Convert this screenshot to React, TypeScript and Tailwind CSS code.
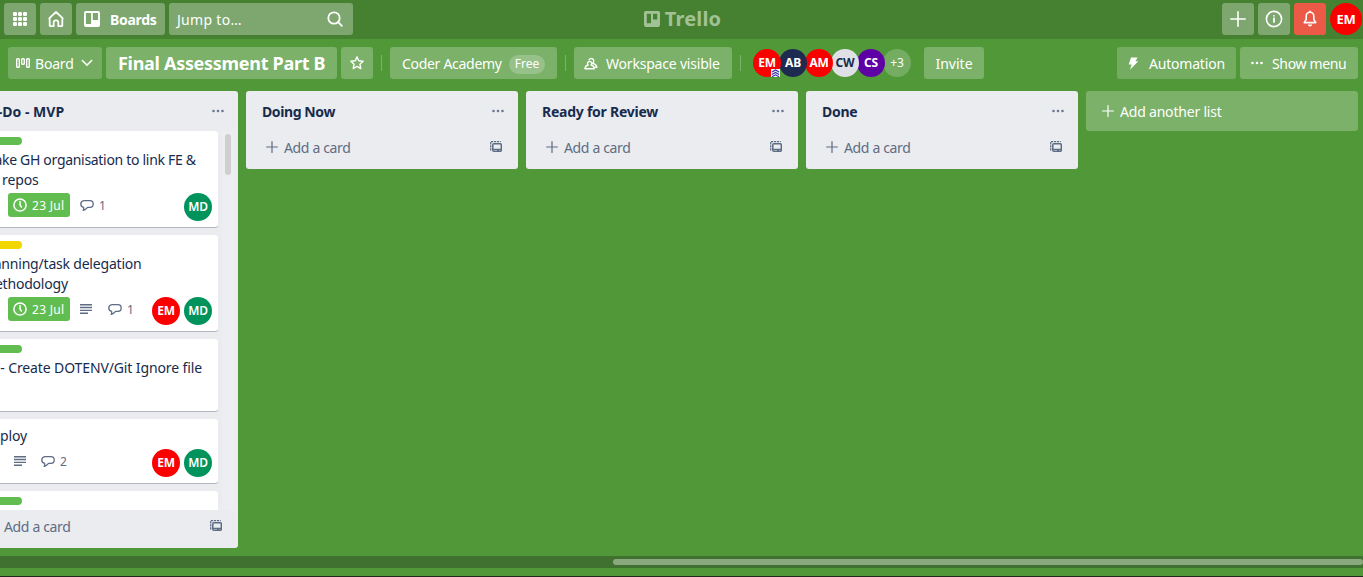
import React from "react";

type IconProps = { className?: string };

const cx = (...parts: (string | undefined | false)[]) => parts.filter(Boolean).join(" ");

const AppsIcon = () => (
  <svg width="16" height="16" viewBox="0 0 16 16" className="shrink-0 fill-white">
    {[1, 6, 11].map((y) =>
      [1, 6, 11].map((x) => <rect key={x + "-" + y} x={x} y={y} width="4" height="4" rx="1.2" />),
    )}
  </svg>
);

const HomeIcon = () => (
  <svg width="18" height="18" viewBox="0 0 18 18" fill="none" stroke="white" strokeWidth="1.8" strokeLinejoin="round" strokeLinecap="round" className="shrink-0">
    <path d="M2.2 8.4 9 1.9l6.8 6.5M2.7 8v7.4q0 .8.8.8h3.2V12q0-1.7 2.3-1.7t2.3 1.7v4.2h3.2q.8 0 .8-.8V8" />
  </svg>
);

const TrelloIcon = ({ className }: IconProps) => (
  <svg width="16" height="16" viewBox="0 0 16 16" className={cx("shrink-0", className)} fill="currentColor" fillRule="evenodd">
    <path d="M2 0h12a2 2 0 0 1 2 2v12a2 2 0 0 1-2 2H2a2 2 0 0 1-2-2V2a2 2 0 0 1 2-2Zm-.1 2v11h5.2V2Zm6.9 0v7h5.2V2Z" />
  </svg>
);

const LogoIcon = () => (
  <svg width="16" height="16" viewBox="0 0 16 16" className="shrink-0" fill="currentColor" fillRule="evenodd">
    <path d="M2 0h12a2 2 0 0 1 2 2v12a2 2 0 0 1-2 2H2a2 2 0 0 1-2-2V2a2 2 0 0 1 2-2Zm.8 2.8v9.4H7V2.8Zm6.2 0v5.7h4.2V2.8Z" />
  </svg>
);

const SearchIcon = () => (
  <svg width="16" height="16" viewBox="0 0 16 16" fill="none" stroke="white" strokeWidth="1.8" strokeLinecap="round" className="shrink-0">
    <circle cx="7" cy="7" r="5.7" />
    <path d="m11.2 11.2 3.6 3.6" />
  </svg>
);

const BoardViewIcon = () => (
  <svg width="14" height="11" viewBox="0 0 14 11" fill="none" stroke="white" strokeWidth="1.4" className="shrink-0">
    <rect x=".7" y=".8" width="2.6" height="8.4" rx=".8" />
    <rect x="5.7" y=".8" width="2.6" height="5.4" rx=".8" />
    <rect x="10.7" y=".8" width="2.6" height="8.4" rx=".8" />
  </svg>
);

const ChevronIcon = () => (
  <svg width="12" height="8" viewBox="0 0 12 8" fill="none" stroke="white" strokeWidth="1.5" strokeLinecap="round" className="shrink-0">
    <path d="m1.3 1.5 4.7 4.6 4.7-4.6" />
  </svg>
);

const StarIcon = () => (
  <svg width="14" height="14" viewBox="0 0 14 14" fill="none" stroke="white" strokeWidth="1.4" strokeLinejoin="round" className="shrink-0">
    <path d="m7 .9 1.7 3.9 4.4.5-3.2 2.9.9 4.4L7 10.4l-3.8 2.2.9-4.4L.9 5.3l4.4-.5Z" />
  </svg>
);

const PeopleIcon = () => (
  <svg width="14" height="13" viewBox="0 0 14 13" fill="none" stroke="white" strokeWidth="1.4" strokeLinejoin="round" strokeLinecap="round" className="shrink-0">
    <path d="M5.1 2.8a2.3 2.3 0 1 1 4.3 2.5q-.3.6-.9 1 3.9 1 4.4 3.9h-2" />
    <path d="M1 11.7q.2-3 3.2-3.7a2.1 2.1 0 1 1 2.9 0q3 .7 3.2 3.7Z" />
  </svg>
);

const BoltIcon = () => (
  <svg width="11" height="13" viewBox="0 0 11 13" className="shrink-0 fill-white">
    <path d="M3 .4h6.6L7.4 4.3h2.9L2 12.8l1.7-5.2H.7Z" />
  </svg>
);

const DotsIcon = () => (
  <svg width="12" height="4" viewBox="0 0 12 4" fill="currentColor" className="shrink-0">
    <circle cx="1.5" cy="2" r="1.3" />
    <circle cx="6" cy="2" r="1.3" />
    <circle cx="10.5" cy="2" r="1.3" />
  </svg>
);

const PlusIcon = ({ className }: IconProps) => (
  <svg viewBox="0 0 12 12" stroke="currentColor" strokeWidth="1.2" strokeLinecap="round" className={cx("shrink-0", className)}>
    <path d="M6 .6v10.8M.6 6h10.8" />
  </svg>
);

const InfoIcon = () => (
  <svg width="18" height="18" viewBox="0 0 18 18" className="shrink-0">
    <circle cx="9" cy="9" r="7.6" fill="none" stroke="white" strokeWidth="1.6" />
    <rect x="8.1" y="7.6" width="1.8" height="5.2" rx=".5" fill="white" />
    <rect x="8.1" y="4.9" width="1.8" height="1.8" rx=".9" fill="white" />
  </svg>
);

const BellIcon = () => (
  <svg width="14" height="18" viewBox="0 0 14 18" className="shrink-0">
    <path d="M7 2.2a3.8 3.8 0 0 0-3.8 3.8v3.4L1.2 12.6h11.6l-2-3.2V6A3.8 3.8 0 0 0 7 2.2Z" fill="none" stroke="white" strokeWidth="1.6" strokeLinejoin="round" />
    <path d="M4.9 14.4h4.2a2.1 2.1 0 0 1-4.2 0ZM6.2.8h1.6v2H6.2Z" fill="white" />
  </svg>
);

const ClockIcon = () => (
  <svg width="14" height="14" viewBox="0 0 14 14" fill="none" stroke="white" strokeWidth="1.5" strokeLinecap="round" className="shrink-0">
    <circle cx="7" cy="7" r="6.1" />
    <path d="M7 3.6V7l1.4 2.2" />
  </svg>
);

const CommentIcon = () => (
  <svg width="14" height="12" viewBox="0 0 14 12" fill="none" stroke="currentColor" strokeWidth="1.3" strokeLinejoin="round" className="shrink-0">
    <path d="M3.6 8.4Q.8 7.9.8 5T4 1.7h6q3.2 0 3.2 3.3T10 8.4H7.6Q5.6 10.8 3.2 11.4q.7-1.4.4-3Z" />
  </svg>
);

const DescriptionIcon = () => (
  <svg width="12" height="10" viewBox="0 0 12 10" fill="currentColor" className="shrink-0">
    <path d="M0 0h12v1.4H0ZM0 2.8h12v1.4H0ZM0 5.7h12v1.4H0ZM0 8.6h8V10H0Z" />
  </svg>
);

const TemplateIcon = () => (
  <svg width="12" height="12" viewBox="0 0 12 12" fill="none" stroke="currentColor" className="shrink-0">
    <path d="M.7 9.5V.7h10" strokeWidth="1.3" strokeDasharray="2.2 .8" />
    <rect x="2.8" y="2.8" width="8.5" height="7.4" rx="1" strokeWidth="1.5" />
    <path d="M3 8.4h8M7.2 9.4h2" strokeWidth="1.3" />
  </svg>
);

const RankIcon = () => (
  <svg width="9" height="8" viewBox="0 0 9 8" className="absolute bottom-0 right-px bg-[#f4f5fb]" fill="none" stroke="#3b2fa8" strokeWidth="1.1">
    <path d="m1 3 3.5-2L8 3M1 5.4l3.5-2 3.5 2M1 7.8l3.5-2 3.5 2" />
  </svg>
);

function Avatar({ initials, tone, className, children }: { initials: string; tone: string; className?: string; children?: React.ReactNode }) {
  return (
    <span className={cx("relative flex size-7 shrink-0 items-center justify-center rounded-full text-[12px] font-bold leading-none tracking-[-0.2px]", tone, className)}>
      {initials}
      {children}
    </span>
  );
}

const RED = "bg-[#fa0000] text-white";
const GREEN = "bg-[#01935c] text-white";

function Header() {
  return (
    <header className="grid h-[39px] shrink-0 grid-cols-[1fr_auto_1fr] bg-[#458130] pt-[3px] text-white">
      <div className="flex gap-1 pl-1">
        <button className="flex size-8 items-center justify-center rounded-[3px] bg-[#7da76e]"><AppsIcon /></button>
        <button className="flex size-8 items-center justify-center rounded-[3px] bg-[#7da76e]"><HomeIcon /></button>
        <button className="flex h-8 w-[89px] items-center gap-[10px] rounded-[3px] bg-[#7da76e] pl-2 font-bold">
          <TrelloIcon />
          <span className="pt-0.5 tracking-[-0.3px]">Boards</span>
        </button>
        <div className="flex h-8 w-[184px] items-center justify-between rounded-[3px] bg-[#7da76e] pl-2 pr-[10px]">
          <span className="pt-0.5 tracking-[0.3px]">Jump to…</span>
          <SearchIcon />
        </div>
      </div>
      <div className="flex h-8 items-center gap-[5px] pl-0.5 text-[#a2c197]">
        <LogoIcon />
        <span className="text-[20px] font-bold leading-none tracking-[0.2px]">Trello</span>
      </div>
      <div className="flex justify-end gap-1 pr-px">
        <button className="flex size-8 items-center justify-center rounded-[3px] bg-[#7da76e]"><PlusIcon className="size-4" /></button>
        <button className="flex size-8 items-center justify-center rounded-[3px] bg-[#7da76e]"><InfoIcon /></button>
        <button className="flex size-8 items-center justify-center rounded-[3px] bg-[#eb5a46]"><BellIcon /></button>
        <Avatar initials="EM" tone={RED} className="size-8! text-[13px]!" />
      </div>
    </header>
  );
}

const Divider = () => <span className="h-4 w-px bg-[#7bb169]" />;

function BoardBar() {
  return (
    <div className="flex h-[52px] shrink-0 items-center pb-3 pl-2 pr-[5px] pt-2 text-white">
      <button className="flex h-8 w-[94px] items-center rounded-[3px] bg-[#74ad61] pl-2">
        <BoardViewIcon />
        <span className="ml-[5px] w-[46px] pt-0.5 text-left tracking-[-0.2px]">Board</span>
        <ChevronIcon />
      </button>
      <h1 className="ml-1 flex h-8 w-[231px] items-center rounded-[3px] bg-[#7bb169] pl-3 text-[18px] font-bold"><span className="whitespace-nowrap tracking-[-0.3px]">Final Assessment Part B</span></h1>
      <button className="ml-1 flex size-8 items-center justify-center rounded-[3px] bg-[#7bb169]"><StarIcon /></button>
      <span className="ml-2 flex"><Divider /></span>
      <button className="ml-2 flex h-8 w-[167px] items-center rounded-[3px] bg-[#7bb169] pl-3">
        <span className="w-[107px] whitespace-nowrap pt-0.5 text-left tracking-[-0.3px]">Coder Academy</span>
        <span className="mt-0.5 flex h-[19px] w-9 items-center justify-center rounded-full bg-[#97c189] text-[12px]">Free</span>
      </button>
      <span className="ml-2 flex"><Divider /></span>
      <button className="ml-2 flex h-8 w-[158px] items-center gap-2 rounded-[3px] bg-[#7bb169] pl-[10px]">
        <PeopleIcon />
        <span className="whitespace-nowrap pt-0.5 tracking-[-0.2px]">Workspace visible</span>
      </button>
      <span className="ml-2 flex"><Divider /></span>
      <div className="ml-3 flex">
        <Avatar initials="EM" tone={RED} className="z-[5]"><RankIcon /></Avatar>
        <Avatar initials="AB" tone="bg-[#1d2b50] text-white" className="z-[4] -ml-0.5" />
        <Avatar initials="AM" tone={RED} className="z-[3] -ml-0.5" />
        <Avatar initials="CW" tone="bg-[#dfe1e6] text-[#172b4d]" className="z-[2] -ml-0.5" />
        <Avatar initials="CS" tone="bg-[#5f00a7] text-white" className="z-[1] -ml-0.5" />
        <Avatar initials="+3" tone="bg-[#74ad61] text-white" className="-ml-0.5 font-normal!" />
      </div>
      <button className="ml-[13px] h-8 w-[60px] rounded-[3px] bg-[#7bb169] pt-0.5">Invite</button>
      <div className="ml-auto flex gap-1">
        <button className="flex h-8 w-[119px] items-center rounded-[3px] bg-[#74ad61] pl-[11px]">
          <BoltIcon />
          <span className="ml-[10px] pt-0.5 tracking-[-0.2px]">Automation</span>
        </button>
        <button className="flex h-8 w-[118px] items-center rounded-[3px] bg-[#7bb169] pl-[11px]">
          <DotsIcon />
          <span className="ml-[9px] whitespace-nowrap pt-0.5 tracking-[-0.35px]">Show menu</span>
        </button>
      </div>
    </div>
  );
}

function ListHeading({ title, className }: { title: string; className?: string }) {
  return (
    <div className="flex h-10 shrink-0 items-center justify-between pl-4 pr-[14px]">
      <h2 className={cx("whitespace-nowrap pt-0.5 font-bold", className)}>{title}</h2>
      <span className="flex text-[#6b778c]"><DotsIcon /></span>
    </div>
  );
}

function AddCard() {
  return (
    <div className="flex h-[38px] shrink-0 items-start justify-between pl-5 pr-4 text-[#5e6c84]">
      <div className="flex h-8 items-center gap-[6px]">
        <PlusIcon className="size-3" />
        <span className="pt-0.5 tracking-[-0.35px]">Add a card</span>
      </div>
      <span className="flex h-8 items-center"><TemplateIcon /></span>
    </div>
  );
}

function Label({ tone }: { tone: string }) {
  return <div className={cx("mt-1.5 h-2 w-10 rounded-full", tone)} />;
}

const DueBadge = () => (
  <span className="flex h-6 w-[62px] items-center gap-[5px] rounded-[3px] bg-[#61bd4f] pl-[5px] text-[12px] text-white">
    <ClockIcon />
    <span className="whitespace-nowrap pt-0.5 tracking-[0.3px]">23 Jul</span>
  </span>
);

const Comments = ({ count }: { count: number }) => (
  <span className="flex h-6 items-center gap-[5px] text-[12px] text-[#5e6c84]">
    <CommentIcon />
    <span className="pt-0.5">{count}</span>
  </span>
);

const Members = ({ both }: { both?: boolean }) => (
  <div className="ml-auto flex gap-1">
    {both && <Avatar initials="EM" tone={RED} />}
    <Avatar initials="MD" tone={GREEN} className="font-semibold!" />
  </div>
);

function Card({ height, children }: { height: string; children: React.ReactNode }) {
  return (
    <article className={cx("flex w-[244px] shrink-0 flex-col rounded-[3px] bg-white pl-2 pr-1.5 shadow-[0_1px_0_#b3b6c3]", height)}>
      {children}
    </article>
  );
}

function TodoList() {
  return (
    <section className="-ml-[34px] flex h-[457px] w-[272px] shrink-0 flex-col rounded-[3px] bg-[#ebecf0]">
      <ListHeading title="To-Do - MVP" />
      <div className="flex h-[379px] shrink-0 justify-between overflow-hidden pl-2 pr-1">
        <div className="flex flex-col gap-2">
          <Card height="h-24">
            <Label tone="bg-[#61bd4f]" />
            <p className="mt-[5px] whitespace-nowrap leading-5"><span className="tracking-[-0.3px]">Make GH organisation to link FE &</span><br /><span className="tracking-[-0.15px]">BE repos</span></p>
            <div className="mt-[3px] flex pl-[26px]">
              <DueBadge />
              <span className="ml-[10px]"><Comments count={1} /></span>
              <Members />
            </div>
          </Card>
          <Card height="h-24">
            <Label tone="bg-[#f2d600]" />
            <p className="mt-[5px] whitespace-nowrap leading-5 tracking-[-0.2px]">Planning/task delegation<br />methodology</p>
            <div className="mt-[3px] flex pl-[26px]">
              <DueBadge />
              <span className="ml-[10px] mr-4 flex h-6 items-center text-[#5e6c84]"><DescriptionIcon /></span>
              <Comments count={1} />
              <Members both />
            </div>
          </Card>
          <Card height="h-[72px]">
            <Label tone="bg-[#61bd4f]" />
            <p className="mt-[5px] whitespace-nowrap leading-5 tracking-[-0.12px]">FE - Create DOTENV/Git Ignore file</p>
          </Card>
          <Card height="h-16">
            <p className="mt-[7px] whitespace-nowrap leading-5 tracking-[-0.1px]">Deploy</p>
            <div className="mt-[3px] flex pl-8">
              <span className="mr-[15px] flex h-6 items-center text-[#5e6c84]"><DescriptionIcon /></span>
              <Comments count={2} />
              <Members both />
            </div>
          </Card>
          <Card height="h-16">
            <Label tone="bg-[#61bd4f]" />
          </Card>
        </div>
        <div className="w-3 bg-[#edeef2] px-[3px] pt-[3px]">
          <div className="h-[41px] w-1.5 rounded-full bg-[#cfcfd0]" />
        </div>
      </div>
      <AddCard />
    </section>
  );
}

function EmptyList({ title, className }: { title: string; className?: string }) {
  return (
    <section className="flex h-[78px] w-[272px] shrink-0 flex-col rounded-[3px] bg-[#ebecf0]">
      <ListHeading title={title} className={className} />
      <AddCard />
    </section>
  );
}

export default function App() {
  return (
    <div className="flex h-[577px] w-[1363px] flex-col overflow-hidden bg-[#519839] font-['Noto_Sans','Open_Sans',sans-serif] text-[14px] leading-5 text-[#172b4d]">
      <Header />
      <BoardBar />
      <main className="flex h-[465px] shrink-0 items-start gap-2">
        <TodoList />
        <EmptyList title="Doing Now" className="tracking-[-0.4px]" />
        <EmptyList title="Ready for Review" className="tracking-[-0.25px]" />
        <EmptyList title="Done" className="tracking-[-0.3px]" />
        <button className="flex h-10 w-[272px] shrink-0 items-center gap-[6px] rounded-[3px] bg-[#7bb169] pl-4 text-white">
          <PlusIcon className="size-3" />
          <span className="pt-0.5 tracking-[-0.2px]">Add another list</span>
        </button>
      </main>
      <div className="flex h-3 shrink-0 items-center justify-end bg-[#417130]">
        <div className="h-1.5 w-[750px] rounded-full bg-[#8ba97f]" />
      </div>
      <div className="mt-auto h-px bg-[#20281c]" />
    </div>
  );
}
